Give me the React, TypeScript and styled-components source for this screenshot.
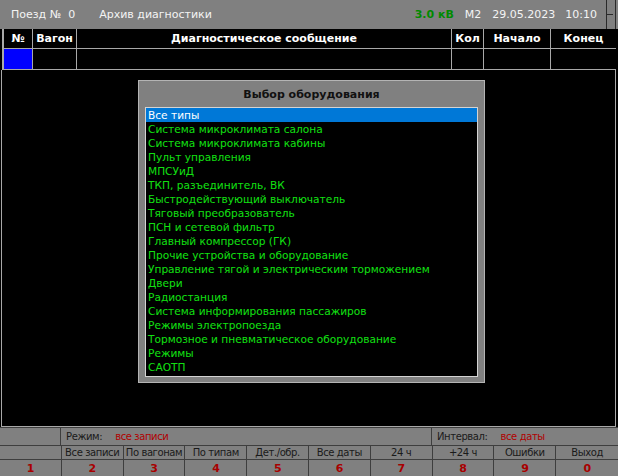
import React from 'react';
import styled, { createGlobalStyle } from 'styled-components';

const GlobalStyle = createGlobalStyle`
  html, body {
    margin: 0;
    padding: 0;
    background: #000;
  }
  body {
    font-family: "DejaVu Sans", Verdana, sans-serif;
    font-size: 11px;
  }
`;

const Screen = styled.div`
  position: relative;
  width: 618px;
  height: 476px;
  display: flex;
  flex-direction: column;
  background: #000;
  overflow: hidden;
`;

const TopBar = styled.div`
  height: 29px;
  flex: none;
  display: flex;
  align-items: center;
  background: #808080;
  color: #f4f4f4;
  padding-left: 11px;
`;

const TopText = styled.span<{ $gap?: number }>`
  margin-left: ${({ $gap }) => $gap ?? 0}px;
  white-space: pre;
`;

const Voltage = styled.span`
  margin-left: auto;
  color: #008a00;
  font-weight: bold;
`;

const CornerMark = styled.div`
  width: 8px;
  height: 29px;
  margin-left: 9px;
  margin-right: 2px;
  border-left: 1px solid #2a2a2a;
  border-right: 1px solid #2a2a2a;
  display: flex;
  align-items: center;
  &::before {
    content: '';
    width: 6px;
    height: 1px;
    background: #2a2a2a;
  }
`;

const Grid = styled.div`
  flex: none;
  display: grid;
  grid-template-columns: 28px 43px 374px 31px 66px 65px;
  grid-auto-rows: 19px 20px;
  gap: 1px;
  background: #a8a8a8;
  padding: 0 2px 1px 2px;
  width: 614px;
  box-sizing: border-box;
  margin-left: 2px;
`;

const HeadCell = styled.div`
  background: #000;
  color: #fff;
  font-weight: bold;
  display: flex;
  align-items: center;
  justify-content: center;
`;

const DataCell = styled.div<{ $active?: boolean }>`
  background: ${({ $active }) => ($active ? '#0000ff' : '#000')};
`;

const Body = styled.div`
  flex: 1;
  margin: 0 2px 0 1px;
  border: 1px solid #a8a8a8;
  border-top: none;
  background: #000;
`;

const Footer = styled.div`
  flex: none;
  background: #808080;
  border-top: 1px solid #3e3e3e;
  font-size: 10px;
  letter-spacing: -0.4px;
  color: #1a1a1a;
`;

const FooterRow = styled.div<{ $cols: string; $h: number }>`
  display: grid;
  grid-template-columns: ${({ $cols }) => $cols};
  height: ${({ $h }) => $h}px;
  border-bottom: 1px solid #3e3e3e;
  &:last-child {
    border-bottom: none;
  }
`;

const FooterCell = styled.div<{ $align?: string }>`
  display: flex;
  align-items: center;
  justify-content: ${({ $align }) => $align ?? 'center'};
  padding-left: ${({ $align }) => ($align ? '5px' : '0')};
  border-right: 1px solid #3e3e3e;
  white-space: nowrap;
  overflow: hidden;
  &:last-child {
    border-right: none;
  }
`;

const Value = styled.span`
  color: #b00000;
  margin-left: 13px;
`;

const KeyNum = styled.span`
  color: #a80000;
  font-weight: bold;
  font-size: 11px;
`;

const Dialog = styled.div`
  position: absolute;
  left: 138px;
  top: 80px;
  width: 347px;
  height: 303px;
  box-sizing: border-box;
  background: #808080;
  border: 1px solid #b4b4b4;
  display: flex;
  flex-direction: column;
  padding: 0 6px 5px 6px;
`;

const DialogTitle = styled.div`
  height: 25px;
  display: flex;
  align-items: center;
  justify-content: center;
  padding-top: 1px;
  font-weight: bold;
  font-size: 11px;
  color: #111;
`;

const List = styled.div`
  flex: 1;
  background: #000;
  border: 1px solid #d4d4d4;
  padding: 0;
`;

const ListItem = styled.div<{ $selected?: boolean }>`
  height: 14px;
  line-height: 14px;
  padding-left: 2px;
  font-size: 10.6px;
  color: ${({ $selected }) => ($selected ? '#fff' : '#12e012')};
  background: ${({ $selected }) => ($selected ? '#0078d7' : 'transparent')};
  white-space: nowrap;
`;

const equipment = [
  'Все типы',
  'Система микроклимата салона',
  'Система микроклимата кабины',
  'Пульт управления',
  'МПСУиД',
  'ТКП, разъединитель, ВК',
  'Быстродействующий выключатель',
  'Тяговый преобразователь',
  'ПСН и сетевой фильтр',
  'Главный компрессор (ГК)',
  'Прочие устройства и оборудование',
  'Управление тягой и электрическим торможением',
  'Двери',
  'Радиостанция',
  'Система информирования пассажиров',
  'Режимы электропоезда',
  'Тормозное и пневматическое оборудование',
  'Режимы',
  'САОТП',
];

const headers = ['№', 'Вагон', 'Диагностическое сообщение', 'Кол', 'Начало', 'Конец'];

const softKeys = ['', 'Все записи', 'По вагонам', 'По типам', 'Дет./обр.', 'Все даты', '24 ч', '+24 ч', 'Ошибки', 'Выход'];
const keyNums = ['1', '2', '3', '4', '5', '6', '7', '8', '9', '0'];

const App: React.FC = () => {
  return (
    <>
      <GlobalStyle />
      <Screen>
        <TopBar>
          <TopText>Поезд №  0</TopText>
          <TopText $gap={24}>Архив диагностики</TopText>
          <Voltage>3.0 кВ</Voltage>
          <TopText $gap={11}>М2</TopText>
          <TopText $gap={11}>29.05.2023</TopText>
          <TopText $gap={10}>10:10</TopText>
          <CornerMark />
        </TopBar>

        <Grid>
          {headers.map((h) => (
            <HeadCell key={h}>{h}</HeadCell>
          ))}
          {headers.map((h, i) => (
            <DataCell key={'d' + h} $active={i === 0} />
          ))}
        </Grid>

        <Body />

        <Footer>
          <FooterRow $cols="61px 371px 1fr" $h={17}>
            <FooterCell />
            <FooterCell $align="flex-start">
              Режим:<Value>все записи</Value>
            </FooterCell>
            <FooterCell $align="flex-start">
              Интервал:<Value>все даты</Value>
            </FooterCell>
          </FooterRow>
          <FooterRow $cols="repeat(10, 1fr)" $h={13}>
            {softKeys.map((k, i) => (
              <FooterCell key={i}>{k}</FooterCell>
            ))}
          </FooterRow>
          <FooterRow $cols="repeat(10, 1fr)" $h={16}>
            {keyNums.map((n) => (
              <FooterCell key={n}>
                <KeyNum>{n}</KeyNum>
              </FooterCell>
            ))}
          </FooterRow>
        </Footer>

        <Dialog>
          <DialogTitle>Выбор оборудования</DialogTitle>
          <List>
            {equipment.map((e, i) => (
              <ListItem key={e} $selected={i === 0}>
                {e}
              </ListItem>
            ))}
          </List>
        </Dialog>
      </Screen>
    </>
  );
};

export default App;
